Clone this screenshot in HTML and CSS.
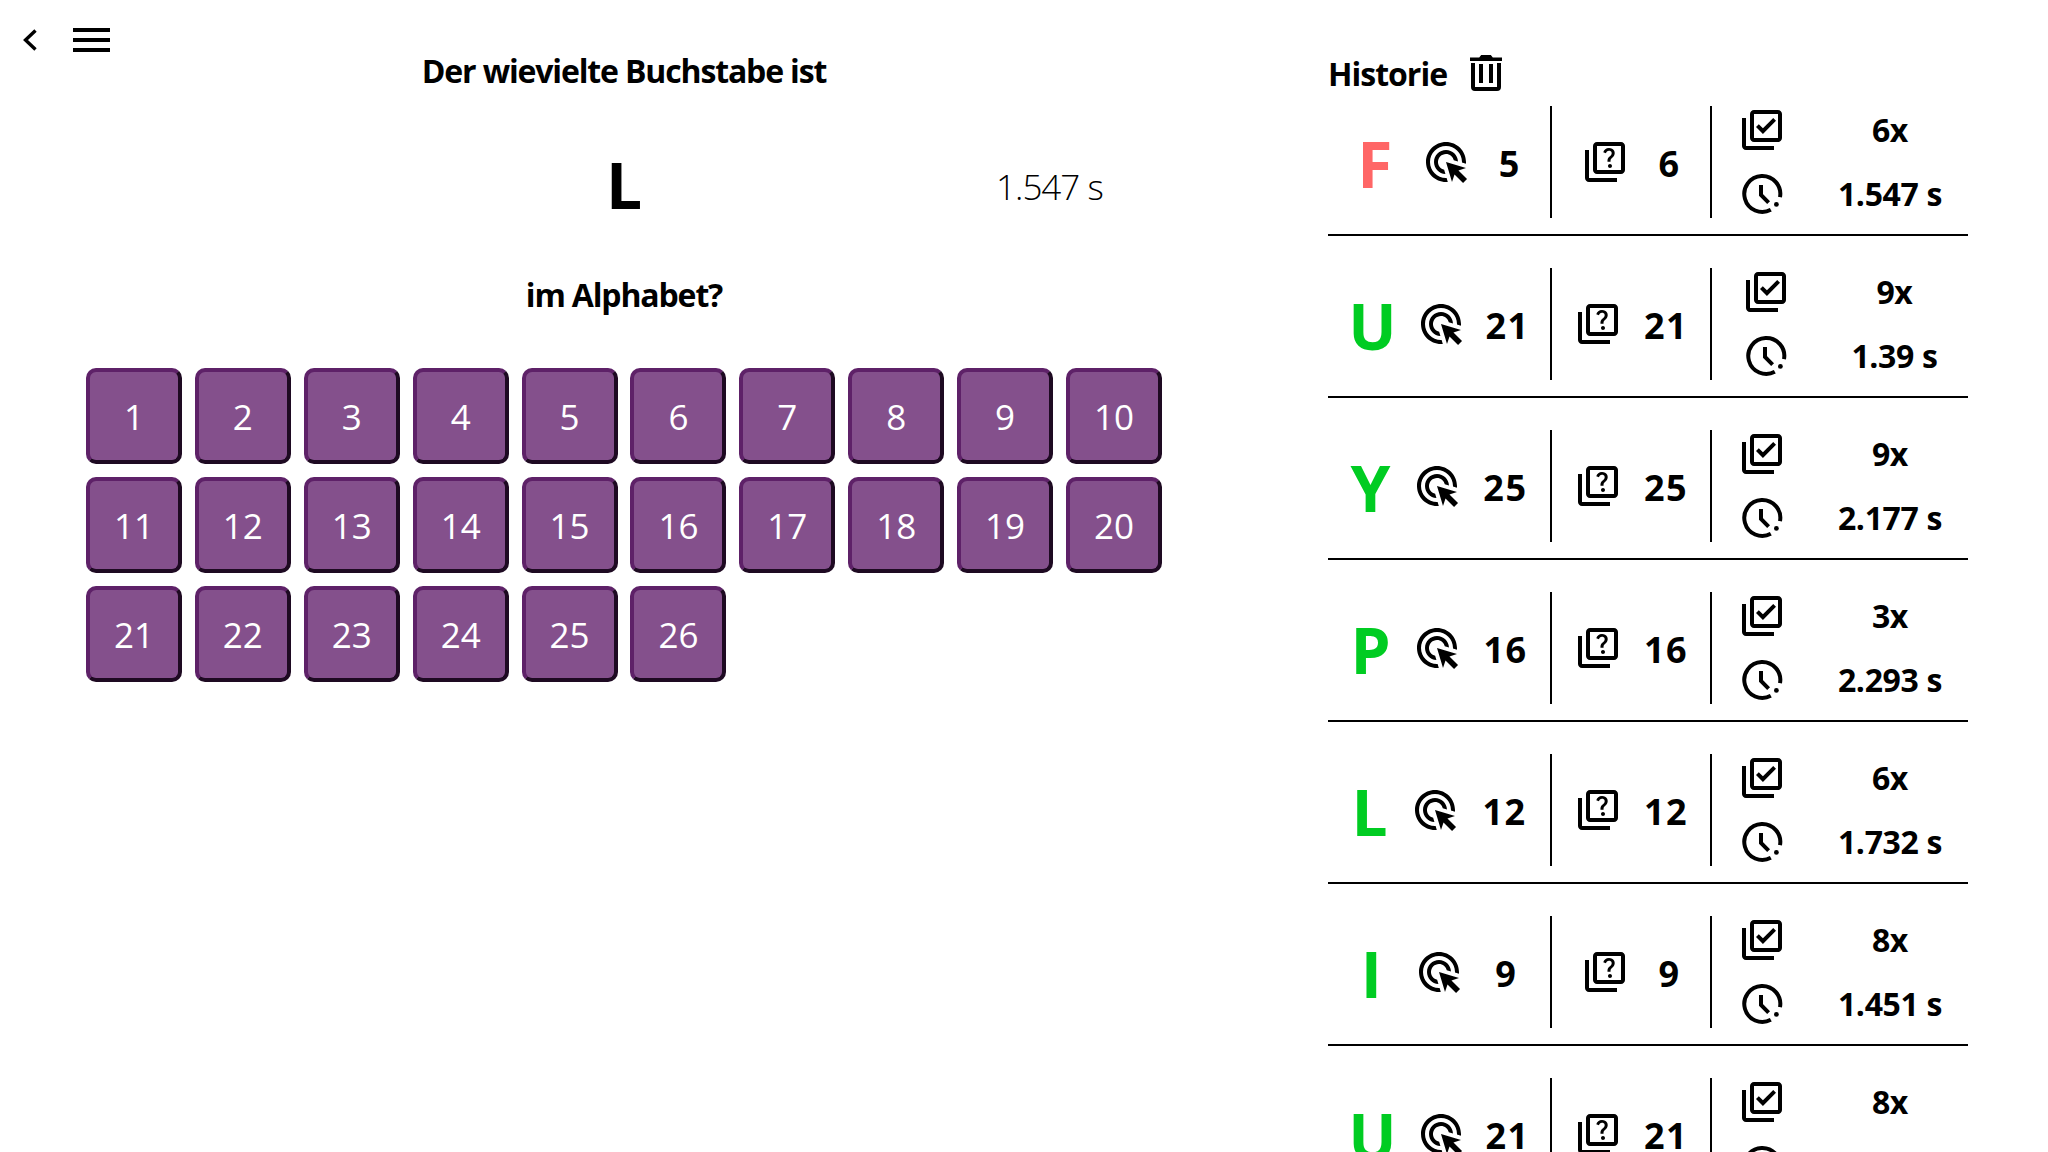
FILE: index.html
```html
<!DOCTYPE html>
<html lang="de">
<head>
  <meta charset="UTF-8" />
  <title>Buchstaben</title>
  <link rel="stylesheet" href="styles.css">
</head>
<body>
  <svg class="defs" width="0" height="0">
    <symbol id="i-click" viewBox="0 0 24 24"><path d="M11.71,17.99C8.53,17.84,6,15.22,6,12c0-3.31,2.69-6,6-6c3.22,0,5.84,2.53,5.99,5.71l-2.1-0.63C15.48,9.31,13.89,8,12,8c-2.21,0-4,1.79-4,4c0,1.89,1.31,3.48,3.08,3.89L11.71,17.99z M22,12c0,0.3-0.01,0.6-0.04,0.9l-1.97-0.59C20,12.21,20,12.1,20,12c0-4.42-3.58-8-8-8s-8,3.58-8,8s3.58,8,8,8c0.1,0,0.21,0,0.31-0.01l0.59,1.97C12.6,21.99,12.3,22,12,22C6.48,22,2,17.52,2,12C2,6.48,6.48,2,12,2S22,6.48,22,12z M18.23,16.26L22,15l-10-3l3,10l1.26-3.77l4.27,4.27l1.98-1.98L18.23,16.26z"/></symbol>
    <symbol id="i-quiz" viewBox="0 0 24 24"><path d="M4,6H2v14c0,1.1,0.9,2,2,2h14v-2H4V6z"/><path d="M20,2H8C6.9,2,6,2.9,6,4v12c0,1.1,0.9,2,2,2h12c1.1,0,2-0.9,2-2V4C22,2.9,21.1,2,20,2z M20,16H8V4h12V16z"/><path d="M13.51,10.16c0.41-0.73,1.18-1.16,1.63-1.8c0.48-0.68,0.21-1.94-1.14-1.94c-0.88,0-1.32,0.67-1.5,1.23l-1.37-0.57C11.51,5.96,12.52,5,13.99,5c1.23,0,2.08,0.56,2.51,1.26c0.37,0.6,0.58,1.73,0.01,2.57c-0.63,0.93-1.23,1.21-1.56,1.81c-0.13,0.24-0.18,0.4-0.18,1.18h-1.52C13.26,11.41,13.19,10.74,13.51,10.16z M15.5,14c0,0.55-0.45,1-1,1s-1-0.45-1-1c0-0.55,0.45-1,1-1S15.5,13.45,15.5,14z"/></symbol>
    <symbol id="i-check" viewBox="0 0 24 24"><path d="M20 4v12H8V4h12m0-2H8c-1.1 0-2 .9-2 2v12c0 1.1.9 2 2 2h12c1.1 0 2-.9 2-2V4c0-1.1-.9-2-2-2zm-7.53 12L9 10.5l1.4-1.41 2.07 2.08L17.6 6 19 7.41 12.47 14zM4 6H2v14c0 1.1.9 2 2 2h14v-2H4V6z"/></symbol>
    <symbol id="i-clock" viewBox="0 0 24 24"><path class="line" d="M21 13.6A9 9 0 1 0 16.4 19.9"/><path class="line" d="M11.5 7.5v5l3.8 3.8"/><circle cx="19.2" cy="17.2" r="1.2"/></symbol>
  </svg>

  <main class="quiz">
    <nav class="topbar">
      <svg class="back" viewBox="0 0 14 22"><path d="M12.5 1.5L2.5 11l10 9.5" /></svg>
      <div class="burger"><span></span><span></span><span></span></div>
    </nav>

    <h2 class="question">Der wievielte Buchstabe ist</h2>
    <div class="prompt">
      <div class="big-letter">L</div>
      <div class="timer">1.547 s</div>
    </div>
    <h2 class="question after">im Alphabet?</h2>

    <div class="keys">
      <button>1</button><button>2</button><button>3</button><button>4</button><button>5</button>
      <button>6</button><button>7</button><button>8</button><button>9</button><button>10</button>
      <button>11</button><button>12</button><button>13</button><button>14</button><button>15</button>
      <button>16</button><button>17</button><button>18</button><button>19</button><button>20</button>
      <button>21</button><button>22</button><button>23</button><button>24</button><button>25</button>
      <button>26</button>
    </div>
  </main>

  <aside class="history">
    <div class="history-head">
      <span>Historie</span>
      <svg class="icon" viewBox="0 0 24 24"><path d="M4 4.2h4.6l1-1.2h4.8l1 1.2H20V6H4z"/><path d="M4.5 7v12a2 2 0 0 0 2 2h11a2 2 0 0 0 2-2V7h-2v12h-11V7z"/><path d="M8.5 7.5h2V17h-2zM13.5 7.5h2V17h-2z"/></svg>
    </div>

    <div class="row">
      <div class="cell"><span class="letter wrong">F</span><svg class="icon"><use href="#i-click"/></svg><span class="num">5</span></div>
      <div class="cell"><svg class="icon"><use href="#i-quiz"/></svg><span class="num">6</span></div>
      <div class="cell stats"><div class="stat-icons"><svg class="icon"><use href="#i-check"/></svg><svg class="icon"><use href="#i-clock"/></svg></div><div class="stat-vals"><span>6x</span><span>1.547 s</span></div></div>
    </div>
    <div class="row">
      <div class="cell"><span class="letter">U</span><svg class="icon"><use href="#i-click"/></svg><span class="num">21</span></div>
      <div class="cell"><svg class="icon"><use href="#i-quiz"/></svg><span class="num">21</span></div>
      <div class="cell stats"><div class="stat-icons"><svg class="icon"><use href="#i-check"/></svg><svg class="icon"><use href="#i-clock"/></svg></div><div class="stat-vals"><span>9x</span><span>1.39 s</span></div></div>
    </div>
    <div class="row">
      <div class="cell"><span class="letter">Y</span><svg class="icon"><use href="#i-click"/></svg><span class="num">25</span></div>
      <div class="cell"><svg class="icon"><use href="#i-quiz"/></svg><span class="num">25</span></div>
      <div class="cell stats"><div class="stat-icons"><svg class="icon"><use href="#i-check"/></svg><svg class="icon"><use href="#i-clock"/></svg></div><div class="stat-vals"><span>9x</span><span>2.177 s</span></div></div>
    </div>
    <div class="row">
      <div class="cell"><span class="letter">P</span><svg class="icon"><use href="#i-click"/></svg><span class="num">16</span></div>
      <div class="cell"><svg class="icon"><use href="#i-quiz"/></svg><span class="num">16</span></div>
      <div class="cell stats"><div class="stat-icons"><svg class="icon"><use href="#i-check"/></svg><svg class="icon"><use href="#i-clock"/></svg></div><div class="stat-vals"><span>3x</span><span>2.293 s</span></div></div>
    </div>
    <div class="row">
      <div class="cell"><span class="letter">L</span><svg class="icon"><use href="#i-click"/></svg><span class="num">12</span></div>
      <div class="cell"><svg class="icon"><use href="#i-quiz"/></svg><span class="num">12</span></div>
      <div class="cell stats"><div class="stat-icons"><svg class="icon"><use href="#i-check"/></svg><svg class="icon"><use href="#i-clock"/></svg></div><div class="stat-vals"><span>6x</span><span>1.732 s</span></div></div>
    </div>
    <div class="row">
      <div class="cell"><span class="letter">I</span><svg class="icon"><use href="#i-click"/></svg><span class="num">9</span></div>
      <div class="cell"><svg class="icon"><use href="#i-quiz"/></svg><span class="num">9</span></div>
      <div class="cell stats"><div class="stat-icons"><svg class="icon"><use href="#i-check"/></svg><svg class="icon"><use href="#i-clock"/></svg></div><div class="stat-vals"><span>8x</span><span>1.451 s</span></div></div>
    </div>
    <div class="row">
      <div class="cell"><span class="letter">U</span><svg class="icon"><use href="#i-click"/></svg><span class="num">21</span></div>
      <div class="cell"><svg class="icon"><use href="#i-quiz"/></svg><span class="num">21</span></div>
      <div class="cell stats"><div class="stat-icons"><svg class="icon"><use href="#i-check"/></svg><svg class="icon"><use href="#i-clock"/></svg></div><div class="stat-vals"><span>8x</span><span>1.420 s</span></div></div>
    </div>
  </aside>
</body>
</html>
```

FILE: styles.css
```css
html, body {
  margin: 0;
  padding: 0;
  height: 100vh;
  overflow: hidden;
  background: #fff;
  color: #000;
  font-family: 'Open Sans', 'Noto Sans', sans-serif;
}

body {
  display: flex;
  align-items: flex-start;
}

.defs {
  position: absolute;
}

.line {
  fill: none;
  stroke: #000;
  stroke-width: 2;
}

.icon {
  display: block;
  flex: none;
  width: 48px;
  height: 48px;
}

.quiz {
  flex: none;
  width: 1248px;
  box-sizing: border-box;
}

.topbar {
  display: flex;
  align-items: center;
  gap: 36px;
  height: 52px;
  padding: 28px 0 0 23px;
  box-sizing: border-box;
}

.back {
  width: 14px;
  height: 22px;
  fill: none;
  stroke: #000;
  stroke-width: 3.4;
}

.burger {
  display: flex;
  flex-direction: column;
  gap: 6px;
  width: 37px;
}

.burger span {
  height: 4px;
  background: #000;
}

.question {
  margin: 0;
  font-size: 32px;
  line-height: 38px;
  font-weight: 700;
  letter-spacing: -1.15px;
  text-align: center;
}

.question.after {
  margin-top: 35px;
}

.prompt {
  display: grid;
  grid-template-columns: 1fr auto 1fr;
  align-items: center;
  height: 112px;
  margin-top: 39px;
}

.big-letter {
  grid-column: 2;
  font-size: 64px;
  line-height: 1;
  font-weight: 700;
}

.timer {
  grid-column: 3;
  margin-left: 354px;
  padding-top: 2px;
  font-size: 35px;
  font-weight: 300;
  letter-spacing: -1px;
}

.keys {
  display: grid;
  grid-template-columns: repeat(10, 96px);
  grid-auto-rows: 96px;
  gap: 13px 12.9px;
  justify-content: center;
  margin-top: 54px;
}

.keys button {
  padding: 0;
  font-family: inherit;
  font-size: 35px;
  font-weight: 400;
  color: #fff;
  background: #84508c;
  border: 4px solid;
  border-color: #5e2168 #1e0a22 #1e0a22 #5e2168;
  border-radius: 10px;
}

.history {
  flex: none;
  width: 640px;
  margin-left: 80px;
  padding-top: 49px;
}

.history-head {
  display: flex;
  align-items: center;
  height: 48px;
  gap: 15px;
  margin-bottom: -23px;
  font-size: 32px;
  font-weight: 700;
  letter-spacing: -1px;
}

.row {
  display: flex;
  box-sizing: border-box;
  height: 162px;
  padding: 32px 0 16px;
  border-bottom: 2px solid #000;
}

.cell {
  display: flex;
  align-items: center;
  justify-content: space-evenly;
  box-sizing: border-box;
  width: 160px;
  height: 112px;
  border-left: 2px solid #000;
}

.cell:first-child {
  width: 222px;
  border-left: none;
}

.cell.stats {
  width: 258px;
  justify-content: space-around;
}

.letter,
.num {
  margin-top: 3px;
  font-weight: 700;
}

.letter {
  font-size: 64px;
  line-height: 1;
  color: #00cc22;
}

.letter.wrong {
  color: #ff6666;
}

.num {
  font-size: 36px;
  letter-spacing: 1.5px;
}

.stat-icons {
  display: flex;
  flex-direction: column;
  gap: 16px;
}

.stat-vals {
  display: flex;
  flex-direction: column;
  gap: 16px;
  text-align: center;
  font-size: 32px;
  font-weight: 700;
  letter-spacing: -0.35px;
}

.stat-vals span {
  height: 48px;
  line-height: 48px;
}
```
